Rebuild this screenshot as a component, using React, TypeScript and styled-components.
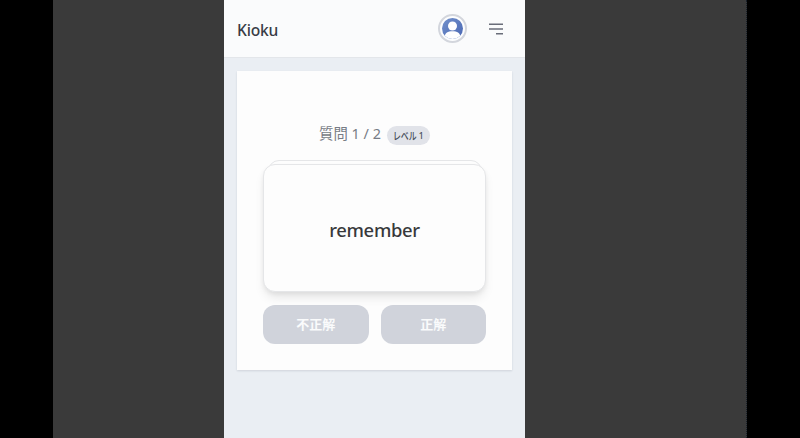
import React from "react";
import styled, { createGlobalStyle } from "styled-components";

const GlobalStyle = createGlobalStyle`
  * { box-sizing: border-box; }
  body {
    margin: 0;
    background: #000;
    overflow: hidden;
    font-family: "Noto Sans", "Noto Sans CJK JP", sans-serif;
  }
`;

const Stage = styled.div`
  width: 694px;
  height: 438px;
  margin-left: 53px;
  padding-left: 171px;
  background: #3a3a3a;
  border-right: 1px dotted #18202a;
`;

const Phone = styled.div`
  width: 301px;
  height: 438px;
  display: flex;
  flex-direction: column;
  background: #eaeef3;
`;

const Header = styled.header`
  height: 58px;
  flex: none;
  display: flex;
  align-items: center;
  padding: 0 21px 0 13px;
  background: #fafbfc;
  border-bottom: 1px solid #e3e6ea;
`;

const Brand = styled.h1`
  margin: 0 auto 0 0;
  padding-top: 2px;
  font-size: 15.6px;
  line-height: 24px;
  font-weight: 500;
  letter-spacing: -0.2px;
  color: #383c46;
`;

const Avatar = styled.button`
  width: 29px;
  height: 29px;
  margin-right: 21px;
  padding: 0;
  display: grid;
  place-items: center;
  border: 2px solid #d3d6dd;
  border-radius: 50%;
  background: #fcfdfe;
`;

const MenuButton = styled.button`
  padding: 0;
  border: 0;
  background: none;
  display: flex;
`;

const Panel = styled.main`
  width: 275px;
  height: 299px;
  margin: 13px 0 0 13px;
  padding: 53px 26px 0;
  display: flex;
  flex-direction: column;
  background: #fdfdfd;
  box-shadow: 0 1px 2px rgba(40, 50, 70, 0.14);
`;

const Progress = styled.div`
  height: 22px;
  display: flex;
  align-items: center;
  justify-content: center;
  gap: 6px;
`;

const Count = styled.span`
  margin-top: -2px;
  font-size: 14.4px;
  line-height: 20px;
  color: #777c85;
  white-space: nowrap;
`;

const Level = styled.span`
  width: 43px;
  height: 19px;
  margin-top: 1px;
  display: flex;
  align-items: center;
  justify-content: center;
  gap: 2px;
  border-radius: 10px;
  background: #e1e3e9;
  color: #454b57;
  font-size: 8.5px;
  font-weight: 500;
  white-space: nowrap;
`;

const Kana = styled.span`
  display: block;
  margin: 0 -4px;
  font-size: 10.5px;
  transform: scaleX(0.75);
`;

const Deck = styled.section`
  height: 132px;
  margin-top: 14px;
  display: flex;
  flex-direction: column;
  align-items: center;
`;

const BackCard = styled.div`
  width: 214px;
  height: 24px;
  flex: none;
  border: 1px solid #e5e6e8;
  border-radius: 11px;
  background: #fdfdfd;
`;

const FrontCard = styled.div`
  position: relative;
  width: 223px;
  height: 128px;
  flex: none;
  margin-top: -20px;
  display: grid;
  place-items: center;
  border: 1px solid #e5e6e8;
  border-radius: 12px;
  background: #fdfdfd;
  box-shadow: 0 7px 11px -2px rgba(0, 0, 0, 0.1), 0 2px 4px rgba(0, 0, 0, 0.05);
`;

const Word = styled.p`
  margin: 3px 0 0;
  font-size: 18.4px;
  line-height: 28px;
  font-weight: 500;
  letter-spacing: -0.3px;
  color: #38393b;
`;

const Answers = styled.div`
  margin-top: 13px;
  display: grid;
  grid-template-columns: 1fr 1fr;
  gap: 12px;
`;

const Answer = styled.button`
  height: 39px;
  padding: 0 0 2px;
  border: 0;
  border-radius: 12px;
  background: #d0d3db;
  color: #fafbfc;
  font-family: "Noto Sans CJK JP", sans-serif;
  font-size: 13px;
  font-weight: 700;
`;

function App() {
  return (
    <>
      <GlobalStyle />
      <Stage>
        <Phone>
          <Header>
            <Brand>Kioku</Brand>
            <Avatar aria-label="Account">
              <svg width="21" height="21" viewBox="0 0 20 20">
                <defs>
                  <linearGradient id="avatarFill" x1="0" y1="0" x2="1" y2="1">
                    <stop offset="0" stopColor="#7391cb" />
                    <stop offset="1" stopColor="#4866b3" />
                  </linearGradient>
                  <clipPath id="avatarClip">
                    <circle cx="10" cy="10" r="10" />
                  </clipPath>
                </defs>
                <g clipPath="url(#avatarClip)">
                  <rect width="20" height="20" fill="url(#avatarFill)" />
                  <circle cx="10" cy="7.6" r="4.3" fill="#fff" />
                  <path d="M2.8 20V17.2C2.8 14.6 5.4 12.7 10 12.7S17.2 14.6 17.2 17.2V20Z" fill="#fff" />
                </g>
              </svg>
            </Avatar>
            <MenuButton aria-label="Menu">
              <svg width="16" height="12" viewBox="0 0 16 12" stroke="#696d79" strokeWidth="1.5">
                <path d="M1 1.2H15M1 6H15M8 10.8H15" />
              </svg>
            </MenuButton>
          </Header>
          <Panel>
            <Progress>
              <Count>質問 1 / 2</Count>
              <Level>
                <Kana>レベル</Kana>
                <span>1</span>
              </Level>
            </Progress>
            <Deck>
              <BackCard />
              <FrontCard>
                <Word>remember</Word>
              </FrontCard>
            </Deck>
            <Answers>
              <Answer>不正解</Answer>
              <Answer>正解</Answer>
            </Answers>
          </Panel>
        </Phone>
      </Stage>
    </>
  );
}

export default App;
